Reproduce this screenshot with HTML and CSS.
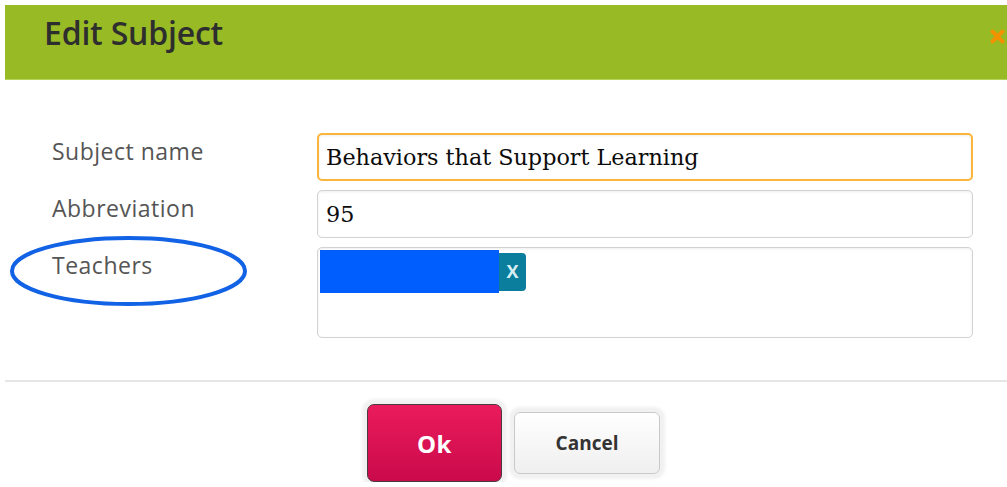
FILE: index.html
```html
<!DOCTYPE html>
<html lang="en">
<head>
  <meta charset="UTF-8">
  <title>Edit Subject</title>
  <link rel="stylesheet" href="styles.css">
</head>
<body>
  <div class="dialog">
    <div class="dialog-header">
      <h1>Edit Subject</h1>
      <svg class="close" width="15" height="15" viewBox="0 0 15 15">
        <path d="M2.5 2.5 L12.5 12.5 M12.5 2.5 L2.5 12.5" stroke="#f39200" stroke-width="4" stroke-linecap="round" fill="none"/>
      </svg>
    </div>

    <div class="form">
      <label class="form-label" for="subjectName">Subject name</label>
      <input class="field is-active" id="subjectName" type="text" value="Behaviors that Support Learning">

      <label class="form-label" for="abbr">Abbreviation</label>
      <input class="field" id="abbr" type="text" value="95">

      <label class="form-label">Teachers</label>
      <div class="tag-box">
        <div class="tag">
          <span class="tag-name"></span>
          <span class="tag-remove">X</span>
        </div>
      </div>
    </div>

    <div class="dialog-footer">
      <button class="btn btn-ok">Ok</button>
      <button class="btn btn-cancel">Cancel</button>
    </div>

    <svg class="highlight" width="241" height="74" viewBox="0 0 241 74">
      <ellipse cx="120.5" cy="37" rx="116.5" ry="33" fill="none" stroke="#1262e6" stroke-width="4"/>
    </svg>
  </div>
</body>
</html>
```

FILE: styles.css
```css
body {
  margin: 0;
  background: #fff;
  font-family: "Open Sans", "Liberation Sans", sans-serif;
}

.dialog {
  position: relative;
  margin: 5px 0 0 5px;
}

.dialog-header {
  display: flex;
  justify-content: space-between;
  align-items: flex-start;
  box-sizing: border-box;
  height: 75px;
  padding: 8px 2px 0 39px;
  background: #98ba24;
  border-bottom: 1px solid #b6d25a;
}

.dialog-header h1 {
  margin: 0;
  font-size: 32px;
  line-height: 40px;
  font-weight: 600;
  color: #2e2e2e;
  letter-spacing: -0.2px;
}

.close {
  margin-top: 16px;
}

.form {
  display: grid;
  grid-template-columns: 265px 656px;
  row-gap: 9px;
  padding: 53px 0 42px 47px;
}

.form-label {
  padding-top: 3px;
  font-size: 23px;
  line-height: 30px;
  color: #555;
  letter-spacing: 0.5px;
}

.field {
  box-sizing: border-box;
  width: 100%;
  height: 48px;
  margin: 0;
  padding: 0 8px;
  font-family: "DejaVu Serif", "Liberation Serif", serif;
  font-size: 22.3px;
  color: #0c0c0c;
  border: 1px solid #d2d2d2;
  border-radius: 5px;
  box-shadow: inset 0 1px 3px rgba(0, 0, 0, 0.07);
  outline: none;
}

.field.is-active {
  border: 2px solid #fbb53b;
  padding: 0 7px;
}

.tag-box {
  box-sizing: border-box;
  height: 91px;
  padding: 2px 0 0 2px;
  border: 1px solid #d2d2d2;
  border-radius: 5px;
  box-shadow: inset 0 1px 3px rgba(0, 0, 0, 0.07);
}

.tag {
  display: flex;
  align-items: center;
}

.tag-name {
  width: 179px;
  height: 43px;
  background: #005eff;
}

.tag-remove {
  display: flex;
  align-items: center;
  justify-content: center;
  width: 27px;
  height: 38px;
  background: #0a7e9c;
  border-radius: 0 4px 4px 0;
  color: #d8eef3;
  font-size: 18px;
  font-weight: 700;
  line-height: 1;
  padding-bottom: 2px;
  box-sizing: border-box;
}

.dialog-footer {
  display: flex;
  justify-content: center;
  align-items: center;
  gap: 12px;
  padding: 22px 0 0 15px;
  border-top: 2px solid #e6e6e6;
}

.btn {
  box-sizing: border-box;
  font-family: "Open Sans", "Liberation Sans", sans-serif;
  font-weight: 700;
  cursor: pointer;
  box-shadow: 0 0 3px 5px #f1f1f1;
}

.btn-ok {
  width: 135px;
  height: 78px;
  font-size: 24px;
  letter-spacing: 0.5px;
  color: #fff;
  background: linear-gradient(#ea1b5c, #ca0a4b);
  border: 1px solid #4b3a3f;
  border-radius: 7px;
}

.btn-cancel {
  width: 146px;
  height: 62px;
  font-size: 19px;
  color: #333;
  background: linear-gradient(#fff, #efefef);
  border: 1px solid #c9c9c9;
  border-radius: 6px;
}

.highlight {
  position: absolute;
  left: 3px;
  top: 229px;
}
```
